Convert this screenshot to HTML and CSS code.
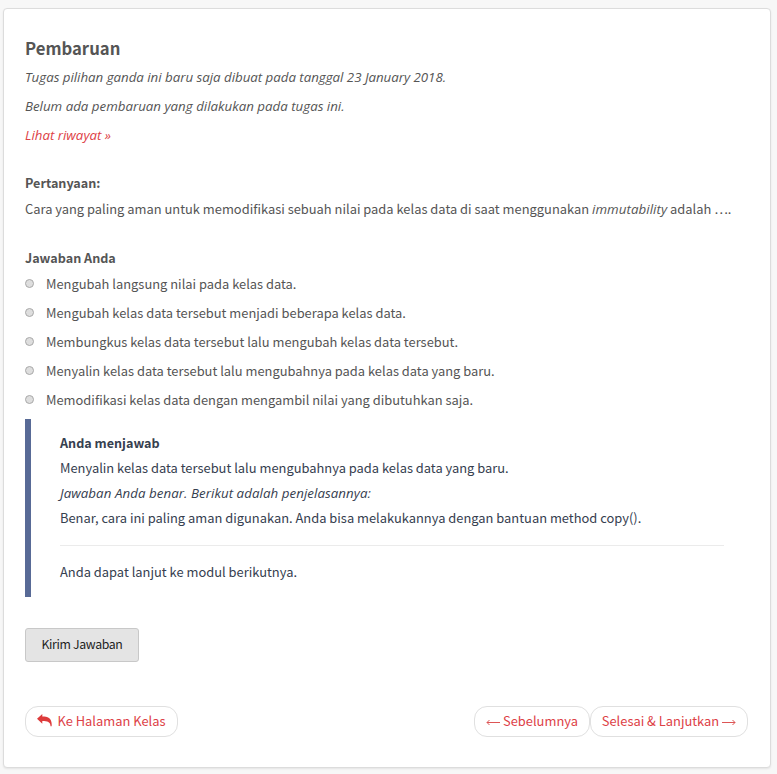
FILE: index.html
```html
<!DOCTYPE html>
<html lang="id">
<head>
<meta charset="utf-8">
<title>Pembaruan</title>
<link rel="stylesheet" href="styles.css">
</head>
<body>
<main class="card">
  <section class="updates">
    <h1>Pembaruan</h1>
    <p><em class="made">Tugas pilihan ganda ini baru saja dibuat pada tanggal 23 January 2018.</em></p>
    <p><em class="none">Belum ada pembaruan yang dilakukan pada tugas ini.</em></p>
    <p><a href="#"><em class="history">Lihat riwayat »</em></a></p>
  </section>
  <section class="question">
    <h2>Pertanyaan:</h2>
    <p>Cara yang paling aman untuk memodifikasi sebuah nilai pada kelas data di saat menggunakan <em class="term">immutability</em> adalah ….</p>
  </section>
  <form class="answers">
    <h2>Jawaban Anda</h2>
    <div class="options">
      <label><input type="radio" name="a" disabled><span>Mengubah langsung nilai pada kelas data.</span></label>
      <label><input type="radio" name="a" disabled><span>Mengubah kelas data tersebut menjadi beberapa kelas data.</span></label>
      <label><input type="radio" name="a" disabled><span>Membungkus kelas data tersebut lalu mengubah kelas data tersebut.</span></label>
      <label><input type="radio" name="a" disabled><span>Menyalin kelas data tersebut lalu mengubahnya pada kelas data yang baru.</span></label>
      <label><input type="radio" name="a" disabled><span>Memodifikasi kelas data dengan mengambil nilai yang dibutuhkan saja.</span></label>
    </div>
    <div class="result">
      <h3>Anda menjawab</h3>
      <p>Menyalin kelas data tersebut lalu mengubahnya pada kelas data yang baru.</p>
      <p><em class="verdict">Jawaban Anda benar. Berikut adalah penjelasannya:</em></p>
      <p>Benar, cara ini paling aman digunakan. Anda bisa melakukannya dengan bantuan method copy().</p>
      <hr>
      <p>Anda dapat lanjut ke modul berikutnya.</p>
    </div>
    <button type="button">Kirim Jawaban</button>
  </form>
  <nav>
    <a class="pill back" href="#"><svg class="reply" viewBox="0 0 15 13"><path d="M0 4.8 5.3 0v2.600c5.800.1 10.200 1.800 9.300 9.700h-1.100C13.700 8.200 10.500 7.100 5.300 7v2.700z"/></svg><span>Ke Halaman Kelas</span></a>
    <a class="pill prev" href="#"><svg class="arrow" viewBox="0 0 14 8"><path d="M14 4.5H1M3.5 2 1 4.5 3.5 7"/></svg><span>Sebelumnya</span></a>
    <a class="pill next" href="#"><span>Selesai &amp; Lanjutkan</span><svg class="arrow" viewBox="0 0 14 8"><path d="M0 4.5h13M10.5 2 13 4.5 10.5 7"/></svg></a>
  </nav>
</main>
</body>
</html>
```
FILE: styles.css
```css
* { box-sizing: border-box; }
body {
  margin: 0;
  padding: 8px 6px 6px 3px;
  height: 774px;
  overflow: hidden;
  background: #f7f7f7;
  color: #555;
  font: 12.9px/26px "Noto Sans CJK JP", "Open Sans", sans-serif;
}
h1, h2, h3, p { margin: 0; white-space: nowrap; }
em { font-family: "Open Sans", sans-serif; font-size: 13.3px; line-height: 1; }
.made { letter-spacing: -.02px; }
.term, .verdict { letter-spacing: .06px; }
a { color: #dd4146; text-decoration: none; }
.card {
  height: 760px;
  padding: 26px 22px 0 21px;
  background: #fff;
  border: 1px solid #dcdcdc;
  border-radius: 4px;
  box-shadow: 0 1px 2px rgba(0, 0, 0, .08);
}
h1 { height: 27px; font-size: 16.7px; line-height: 26px; font-weight: 700; }
.updates p { height: 29px; line-height: 29px; }
h2, h3 { font-size: 12.6px; font-weight: 700; }
.question { margin-top: 21px; }
.question p { height: 26px; }
.answers { margin-top: 23px; }
.options { margin-top: -2px; }
.answers label { display: flex; align-items: center; height: 29px; white-space: nowrap; }
.answers input {
  appearance: none;
  width: 9px;
  height: 9px;
  margin: 0 12px 0 0;
  border: 1px solid #a9a9a9;
  border-radius: 50%;
  background: #dedede;
}
.result {
  height: 178px;
  margin-top: 5px;
  padding: 11px 24px 0 29px;
  border-left: 6px solid #586a96;
  color: #36404f;
  line-height: 25px;
}
.result p { height: 25px; }
.result hr { height: 1px; margin: 15px 0 13px; border: 0; background: #ebebeb; }
button {
  display: block;
  width: 114px;
  height: 34px;
  margin-top: 31px;
  padding: 0 0 2px;
  border: 1px solid #c8c8c8;
  border-radius: 3px;
  background: #e4e4e4;
  color: #222;
  font: 12.3px/30px "Noto Sans CJK JP", sans-serif;
  letter-spacing: -.35px;
}
nav { display: flex; margin-top: 44px; }
.pill {
  display: flex;
  align-items: center;
  justify-content: center;
  height: 31px;
  border: 1px solid #e0e0e0;
  border-radius: 13px;
  white-space: nowrap;
}
.pill span { padding-bottom: 2px; }
.back { width: 153px; margin-right: auto; gap: 5px; }
.prev { width: 116px; gap: 3px; }
.next { width: 158px; gap: 3px; }
.reply { width: 15px; height: 13px; margin-bottom: 2px; fill: #dd3b3b; }
.arrow { width: 14px; height: 8px; fill: none; stroke: #dd5555; stroke-width: 1; }
```
